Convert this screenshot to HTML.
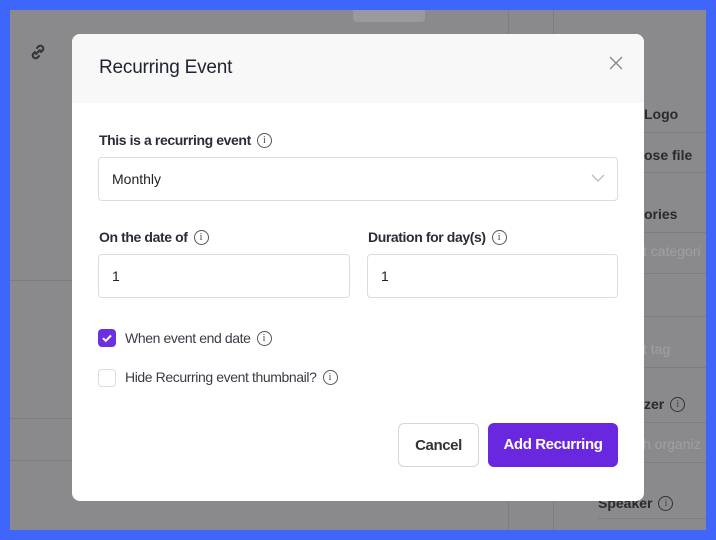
<!DOCTYPE html>
<html><head><style>
*{box-sizing:border-box;margin:0;padding:0}
body{width:716px;height:540px;background:#3e66fb;position:relative;overflow:hidden;font-family:"Liberation Sans",sans-serif}
.bg{position:absolute;left:10px;top:10px;width:696px;height:520px;background:#8a8a8c;overflow:hidden}
.bg .t{position:absolute;color:#2a2a2e;font-size:14px;font-weight:bold;display:flex;align-items:center}
.bg .p{position:absolute;color:#a0a0a3;font-size:14px}
.ln{position:absolute;background:#7d7d80}
.modal{position:absolute;left:72px;top:34px;width:572px;height:467px;background:#fff;border-radius:8px;overflow:hidden}
.hd{height:69px;background:#f8f8f8;padding:23px 27px;font-size:19px;color:#1f2433;letter-spacing:-0.2px}
.x{position:absolute;right:21px;top:22px}
.lab{position:absolute;font-size:14px;color:#2a2d35;font-weight:bold;letter-spacing:-0.4px;display:flex;align-items:center;height:18px}
.i{display:inline-block;width:15px;height:15px;border:1.2px solid #555;border-radius:50%;font-size:10px;text-align:center;line-height:13px;font-weight:normal;margin-left:6px;font-family:"Liberation Serif",serif;color:#444;letter-spacing:0}
.in{position:absolute;border:1px solid #dcdcdf;border-radius:4px;height:44px;padding:0 13px;line-height:42px;font-size:14px;color:#222}
.cb{position:absolute;width:18px;height:18px;border-radius:4px}
.ct{position:absolute;font-size:14px;color:#3a3d45;letter-spacing:-0.4px;display:flex;align-items:center;height:18px}
.btn{position:absolute;top:389px;height:44px;border-radius:6px;font-size:15px;font-weight:bold;line-height:44px;text-align:center;letter-spacing:-0.4px}
</style></head><body>
<div class="bg">
<div style="position:absolute;left:343px;top:0;width:72px;height:12px;background:#9a9a9c;border-radius:0 0 4px 4px"></div>
<div class="ln" style="left:498px;top:0;width:1px;height:520px"></div>
<div class="ln" style="left:543px;top:0;width:1px;height:520px"></div>
<svg style="position:absolute;left:18px;top:32px" width="20" height="20" viewBox="0 0 20 20"><g fill="none" stroke="#333" stroke-width="2" stroke-linecap="round"><path d="M8 12l4-4"/><path d="M9 6l2-2a3 3 0 014 4l-2 2"/><path d="M11 14l-2 2a3 3 0 01-4-4l2-2"/></g></svg>
<div class="ln" style="left:0;top:270px;width:62px;height:1px"></div>
<div class="ln" style="left:0;top:408px;width:62px;height:1px"></div>
<div class="ln" style="left:0;top:450px;width:62px;height:1px"></div>
<div class="t" style="left:634px;top:96px">Logo</div>
<div class="ln" style="left:588px;top:122px;width:108px;height:1px"></div>
<div class="t" style="left:634px;top:137px">ose file</div>
<div class="ln" style="left:588px;top:162px;width:108px;height:1px"></div>
<div class="t" style="left:634px;top:196px">ories</div>
<div class="ln" style="left:588px;top:222px;width:108px;height:1px"></div>
<div class="p" style="left:626px;top:233px">ct categori</div>
<div class="ln" style="left:588px;top:263px;width:108px;height:1px"></div>
<div class="ln" style="left:588px;top:306px;width:108px;height:1px"></div>
<div class="p" style="left:626px;top:331px">ct tag</div>
<div class="ln" style="left:588px;top:357px;width:108px;height:1px"></div>
<div class="t" style="left:634px;top:386px">zer <span class="i" style="border-color:#333">i</span></div>
<div class="ln" style="left:588px;top:412px;width:108px;height:1px"></div>
<div class="p" style="left:626px;top:426px">ch organiz</div>
<div class="ln" style="left:588px;top:452px;width:108px;height:1px"></div>
<div class="t" style="left:588px;top:485px">Speaker <span class="i" style="border-color:#333">i</span></div>
<div class="ln" style="left:588px;top:508px;width:108px;height:1px"></div>
</div>
<div class="modal">
<div class="hd">Recurring Event</div>
<svg class="x" width="14" height="14" viewBox="0 0 14 14"><path d="M1 1l12 12M13 1L1 13" stroke="#888" stroke-width="1.4"/></svg>
<div class="lab" style="left:27px;top:97px">This is a recurring event<span class="i">i</span></div>
<div class="in" style="left:26px;top:123px;width:520px">Monthly
<svg style="position:absolute;right:12px;top:15px" width="14" height="10" viewBox="0 0 14 10"><path d="M1 2l6 6 6-6" fill="none" stroke="#bbb" stroke-width="1.3"/></svg></div>
<div class="lab" style="left:27px;top:194px">On the date of<span class="i">i</span></div>
<div class="lab" style="left:296px;top:194px">Duration for day(s)<span class="i">i</span></div>
<div class="in" style="left:26px;top:220px;width:252px">1</div>
<div class="in" style="left:295px;top:220px;width:251px">1</div>
<div class="cb" style="left:26px;top:295px;background:#6b31e0"><svg width="18" height="18" viewBox="0 0 18 18"><path d="M5 9.2l2.8 2.6L13 6.5" fill="none" stroke="#fff" stroke-width="2"/></svg></div>
<div class="ct" style="left:53px;top:295px">When event end date<span class="i">i</span></div>
<div class="cb" style="left:26px;top:335px;border:1px solid #ddd"></div>
<div class="ct" style="left:53px;top:334px">Hide Recurring event thumbnail?<span class="i">i</span></div>
<div class="btn" style="left:326px;width:81px;border:1px solid #d6d6d9;color:#333">Cancel</div>
<div class="btn" style="left:416px;width:130px;background:#6a27e0;color:#fff">Add Recurring</div>
</div>
</body></html>
